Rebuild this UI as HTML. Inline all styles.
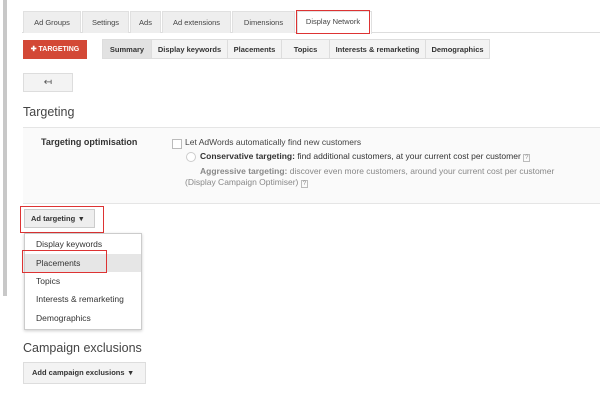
<!DOCTYPE html>
<html><head><style>
body{margin:0;width:600px;height:401px;background:#fff;font-family:"Liberation Sans",sans-serif;position:relative;overflow:hidden;color:#333}
.a{position:absolute}
.tab{position:absolute;top:11px;height:21px;background:#eee;border:1px solid #e0e0e0;border-bottom:none;font-size:7.5px;line-height:21px;text-align:center;color:#444}
.seg{position:absolute;top:39px;height:20px;background:#f3f3f3;border:1px solid #ddd;font-size:7.5px;font-weight:bold;line-height:20px;text-align:center;color:#333;box-sizing:border-box}
.mi{position:absolute;left:0;width:116px;height:18px;font-size:8.5px;line-height:18px;padding-left:11px;box-sizing:border-box;color:#333}
</style></head><body>
<div class="a" style="left:3px;top:0;width:4px;height:296px;background:#c8c8c8"></div>
<div class="a" style="left:22px;top:32px;width:578px;height:1px;background:#ddd"></div>
<div class="tab" style="left:23px;width:56px">Ad Groups</div>
<div class="tab" style="left:82px;width:45px">Settings</div>
<div class="tab" style="left:130px;width:29px">Ads</div>
<div class="tab" style="left:162px;width:67px">Ad extensions</div>
<div class="tab" style="left:232px;width:61px">Dimensions</div>
<div class="tab" style="left:297px;width:73px;background:#fff;height:22px"></div>
<div class="a" style="left:296px;top:10px;width:72px;height:22px;border:1.5px solid #d33;font-size:7.5px;line-height:22px;text-align:center;color:#444">Display Network</div>
<div class="a" style="left:23px;top:40px;width:64px;height:19px;background:#d34836;color:#fff;font-size:7px;font-weight:bold;line-height:19px;text-align:center">✚ TARGETING</div>
<div class="seg" style="left:102px;width:50px;background:#e2e2e2">Summary</div>
<div class="seg" style="left:151px;width:77px">Display keywords</div>
<div class="seg" style="left:227px;width:55px">Placements</div>
<div class="seg" style="left:281px;width:49px">Topics</div>
<div class="seg" style="left:329px;width:97px">Interests &amp; remarketing</div>
<div class="seg" style="left:425px;width:65px">Demographics</div>
<div class="a" style="left:23px;top:73px;width:50px;height:19px;background:#f3f3f3;border:1px solid #ddd;box-sizing:border-box;font-size:10px;text-align:center;line-height:17px;color:#555">↤</div>
<div class="a" style="left:23px;top:105px;font-size:12.5px;color:#444">Targeting</div>
<div class="a" style="left:23px;top:127px;width:580px;height:75px;background:#fafafa;border-top:1px solid #e5e5e5;border-bottom:1px solid #e5e5e5"></div>
<div class="a" style="left:41px;top:137px;font-size:9px;font-weight:bold;color:#333">Targeting optimisation</div>
<div class="a" style="left:172px;top:139px;width:8px;height:8px;border:1px solid #bbb;background:#fff"></div>
<div class="a" style="left:185px;top:137px;font-size:8.5px;color:#444">Let AdWords automatically find new customers</div>
<div class="a" style="left:186px;top:152px;width:8px;height:8px;border:1px solid #ccc;border-radius:50%;background:#fff"></div>
<div class="a" style="left:200px;top:151px;font-size:8.5px;color:#333"><b>Conservative targeting:</b> find additional customers, at your current cost per customer <span style="border:1px solid #bbb;font-size:6px;padding:0 1px;color:#888">?</span></div>
<div class="a" style="left:200px;top:166px;font-size:8.5px;color:#888"><b>Aggressive targeting:</b> discover even more customers, around your current cost per customer</div>
<div class="a" style="left:185px;top:177px;font-size:8.5px;color:#888">(Display Campaign Optimiser) <span style="border:1px solid #bbb;font-size:6px;padding:0 1px">?</span></div>
<div class="a" style="left:24px;top:209px;width:71px;height:19px;background:#eee;border:1px solid #ccc;box-sizing:border-box;font-size:7.5px;font-weight:bold;line-height:17px;padding-left:6px">Ad targeting &nbsp;▾</div>
<div class="a" style="left:20px;top:206px;width:82px;height:25px;border:1.5px solid #d33"></div>
<div class="a" style="left:24px;top:233px;width:116px;height:95px;background:#fff;border:1px solid #ccc;box-shadow:0 1px 3px rgba(0,0,0,.2)">
<div class="mi" style="top:1px">Display keywords</div>
<div class="mi" style="top:20px;background:#e6e6e6">Placements</div>
<div class="mi" style="top:38px">Topics</div>
<div class="mi" style="top:56px">Interests &amp; remarketing</div>
<div class="mi" style="top:75px">Demographics</div>
</div>
<div class="a" style="left:22px;top:250px;width:83px;height:21px;border:1.5px solid #d33"></div>
<div class="a" style="left:23px;top:341px;font-size:12.5px;color:#444">Campaign exclusions</div>
<div class="a" style="left:23px;top:362px;width:123px;height:22px;background:#f3f3f3;border:1px solid #ddd;box-sizing:border-box;font-size:7.5px;font-weight:bold;line-height:20px;padding-left:8px">Add campaign exclusions &nbsp;▾</div>
</body></html>
